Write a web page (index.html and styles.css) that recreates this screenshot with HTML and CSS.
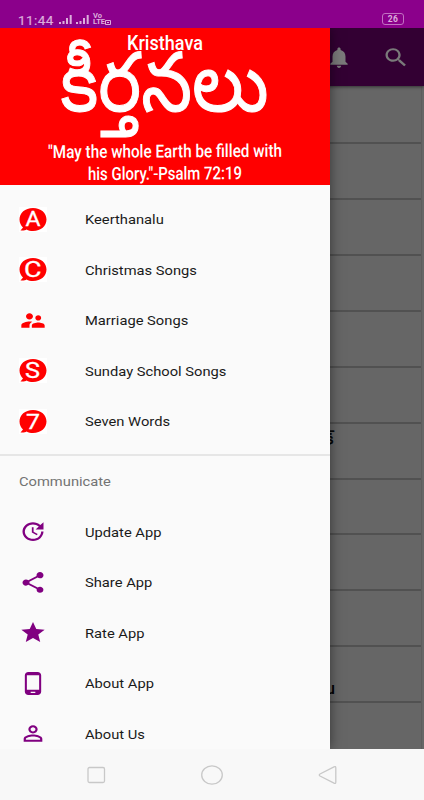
FILE: index.html
```html
<!DOCTYPE html>
<html lang="en">
<head>
<meta charset="utf-8">
<title>Kristhava Keerthanalu</title>
<link rel="stylesheet" href="styles.css">
</head>
<body>
<div class="phone">
  <header class="status">
    <div class="status-left">
      <span class="clock">11:44</span>
      <svg class="signal" width="13" height="10" viewBox="0 0 13 10"><path d="M0 8h2v2H0zM3.500 7h2v3h-2zM7 4h2v6H7zM10.700 1h2v9h-2z"/></svg>
      <svg class="signal" width="13" height="10" viewBox="0 0 13 10"><path d="M0 8h2v2H0zM3.500 7h2v3h-2zM7 4h2v6H7zM10.700 1h2v9h-2z"/></svg>
      <span class="volte"><span>Vo</span><span class="lte">LTE<svg width="6" height="5" viewBox="0 0 6 5"><path d="M.5.500h5v4h-5zM2 2.500h2"/></svg></span></span>
    </div>
    <div class="battery">26</div>
  </header>
  <main class="screen">
    <div class="toolbar">
      <svg class="bell" width="26" height="25" viewBox="0 0 24 24" preserveAspectRatio="none"><path d="M12 22c1.100 0 2-.9 2-2h-4c0 1.100.890 2 2 2zm6-6v-5c0-3.070-1.640-5.640-4.500-6.320V4c0-.830-.670-1.500-1.500-1.500s-1.500.670-1.500 1.500v.680C7.630 5.360 6 7.920 6 11v5l-2 2v1h16v-1l-2-2z"/></svg>
      <svg class="search" width="28" height="25" viewBox="0 0 24 24" preserveAspectRatio="none"><path d="M15.500 14h-.790l-.280-.270C15.410 12.590 16 11.110 16 9.500 16 5.910 13.090 3 9.500 3S3 5.910 3 9.500 5.910 16 9.500 16c1.610 0 3.090-.590 4.230-1.570l.270.280v.790l5 4.990L20.490 19l-4.990-5zm-6 0C7.010 14 5 11.990 5 9.500S7.010 5 9.500 5 14 7.010 14 9.500 11.990 14 9.500 14z"/></svg>
    </div>
    <div class="songs">
      <div class="song"></div><div class="song"></div><div class="song"></div><div class="song"></div><div class="song"></div><div class="song"></div>
      <div class="song"><span class="peek telugu">క్</span></div>
      <div class="song"></div><div class="song"></div><div class="song"></div>
      <div class="song low"><span class="peek latin">u</span></div>
      <div class="song"></div>
    </div>
    <aside class="drawer">
      <div class="banner">
        <svg width="330" height="157" viewBox="0 28 330 157">
          <text class="title" transform="translate(60.500 110.500) scale(1 1.140)" textLength="208" lengthAdjust="spacingAndGlyphs">కీర్తనలు</text>
          <text class="brand" x="127" y="49.500" textLength="76" lengthAdjust="spacingAndGlyphs">Kristhava</text>
          <text class="verse" transform="translate(48 158) rotate(-.3)" textLength="234" lengthAdjust="spacingAndGlyphs">"May the whole Earth be filled with</text>
          <text class="verse" transform="translate(88 180) rotate(-.3)" textLength="154" lengthAdjust="spacingAndGlyphs">his Glory."-Psalm 72:19</text>
        </svg>
      </div>
      <nav class="menu">
        <div class="item"><svg class="bubble" viewBox="0 0 28 25"><path class="tile" d="M0 0h28v25H0z"/><path d="M14 1C6 1 .5 6 .5 12.500c0 3.500 1.500 6 3.500 8L1.500 23.500c3 .3 5-.2 6-1 2 1 4 1.500 6.500 1.500 8 0 13.500-5 13.500-11.500S22 1 14 1z"/><text x="6.500" y="19" textLength="15" lengthAdjust="spacingAndGlyphs">A</text></svg><span class="label">Keerthanalu</span></div>
        <div class="item"><svg class="bubble" viewBox="0 0 28 25"><path class="tile" d="M0 0h28v25H0z"/><path d="M14 1C6 1 .5 6 .5 12.500c0 3.500 1.500 6 3.500 8L1.500 23.500c3 .3 5-.2 6-1 2 1 4 1.500 6.500 1.500 8 0 13.500-5 13.500-11.500S22 1 14 1z"/><text x="5" y="20" textLength="17.500" lengthAdjust="spacingAndGlyphs" class="wide">C</text></svg><span class="label">Christmas Songs</span></div>
        <div class="item"><svg class="icon couple" viewBox="0 0 24 24" preserveAspectRatio="none"><path d="M16.500 12c1.380 0 2.490-1.120 2.490-2.500S17.880 7 16.500 7 14 8.120 14 9.500s1.120 2.500 2.500 2.500zM9 11c1.660 0 2.990-1.340 2.990-3S10.660 5 9 5 6 6.340 6 8s1.340 3 3 3zm7.500 3c-1.830 0-5.500.920-5.500 2.750V19h11v-2.250c0-1.830-3.670-2.750-5.500-2.750zM9 13c-2.330 0-7 1.170-7 3.500V19h7v-2.250c0-.850.330-2.340 2.370-3.470C10.500 13.100 9.660 13 9 13z"/></svg><span class="label">Marriage Songs</span></div>
        <div class="item"><svg class="bubble" viewBox="0 0 28 25"><path class="tile" d="M0 0h28v25H0z"/><path d="M14 1C6 1 .5 6 .5 12.500c0 3.500 1.500 6 3.500 8L1.500 23.500c3 .3 5-.2 6-1 2 1 4 1.500 6.500 1.500 8 0 13.500-5 13.500-11.500S22 1 14 1z"/><text x="6" y="19.500" textLength="15" lengthAdjust="spacingAndGlyphs" class="wide">S</text></svg><span class="label">Sunday School Songs</span></div>
        <div class="item"><svg class="bubble" viewBox="0 0 28 25"><path class="tile" d="M0 0h28v25H0z"/><path d="M14 1C6 1 .5 6 .5 12.500c0 3.500 1.500 6 3.500 8L1.500 23.500c3 .3 5-.2 6-1 2 1 4 1.500 6.500 1.500 8 0 13.500-5 13.500-11.500S22 1 14 1z"/><text x="7" y="19.500" textLength="14" lengthAdjust="spacingAndGlyphs">7</text></svg><span class="label">Seven Words</span></div>
      </nav>
      <div class="heading"><span class="label">Communicate</span></div>
      <nav class="menu second">
        <div class="item"><svg class="icon" viewBox="0 0 24 24" preserveAspectRatio="none"><path d="M21 10.120h-6.780l2.740-2.820c-2.730-2.700-7.150-2.800-9.880-.1-2.730 2.710-2.730 7.080 0 9.790s7.150 2.710 9.880 0C18.320 15.650 19 14.080 19 12.100h2c0 1.980-.880 4.550-2.640 6.290-3.510 3.480-9.210 3.480-12.720 0-3.500-3.470-3.530-9.110-.020-12.580s9.140-3.470 12.650 0L21 3v7.120zM12.500 8v4.250l3.500 2.080-.720 1.210L11 13V8h1.500z"/></svg><span class="label">Update App</span></div>
        <div class="item"><svg class="icon" viewBox="0 0 24 24" preserveAspectRatio="none"><path d="M18 16.080c-.760 0-1.440.300-1.960.770L8.910 12.700c.050-.230.090-.460.090-.700s-.040-.470-.090-.700l7.050-4.110c.540.500 1.250.810 2.040.810 1.660 0 3-1.340 3-3s-1.340-3-3-3-3 1.340-3 3c0 .240.040.470.090.700L8.040 9.810C7.500 9.310 6.790 9 6 9c-1.660 0-3 1.340-3 3s1.340 3 3 3c.790 0 1.500-.310 2.040-.810l7.120 4.160c-.050.210-.080.430-.080.650 0 1.610 1.310 2.920 2.920 2.920s2.920-1.310 2.920-2.920-1.310-2.920-2.920-2.920z"/></svg><span class="label">Share App</span></div>
        <div class="item"><svg class="icon" viewBox="0 0 24 24" preserveAspectRatio="none"><path d="M12 17.270L18.180 21l-1.640-7.030L22 9.240l-7.190-.610L12 2 9.190 8.630 2 9.240l5.460 4.730L5.820 21z"/></svg><span class="label">Rate App</span></div>
        <div class="item"><svg class="icon" viewBox="0 0 24 24" preserveAspectRatio="none"><path d="M16 1H8C6.340 1 5 2.340 5 4v16c0 1.660 1.340 3 3 3h8c1.660 0 3-1.340 3-3V4c0-1.660-1.340-3-3-3zm-2 20h-4v-1h4v1zm3.250-3H6.750V4h10.500v14z"/></svg><span class="label">About App</span></div>
        <div class="item"><svg class="icon" viewBox="0 0 24 24" preserveAspectRatio="none"><path d="M12 5.900c1.160 0 2.100.940 2.100 2.100s-.940 2.100-2.100 2.100S9.900 9.160 9.900 8s.940-2.100 2.100-2.100m0 9c2.970 0 6.100 1.460 6.100 2.100v1.100H5.900V17c0-.640 3.130-2.100 6.100-2.100M12 4C9.790 4 8 5.790 8 8s1.790 4 4 4 4-1.790 4-4-1.790-4-4-4zm0 9c-2.670 0-8 1.340-8 4v3h16v-3c0-2.660-5.330-4-8-4z"/></svg><span class="label">About Us</span></div>
      </nav>
    </aside>
  </main>
  <footer class="keys">
    <svg width="20" height="20" viewBox="0 0 20 20"><rect x="2" y="2.500" width="16.500" height="15" rx="1.500"/></svg>
    <svg width="24" height="20" viewBox="0 0 24 20"><ellipse cx="12" cy="10" rx="10.300" ry="9.200"/></svg>
    <svg width="20" height="20" viewBox="0 0 20 20"><path d="M16 1.800Q17.800 1 17.800 2.800V17.200Q17.800 19 16 18.200L2 11Q.5 10 2 9z"/></svg>
  </footer>
</div>
</body>
</html>
```
FILE: styles.css
```css
* { box-sizing: border-box; }
body { margin: 0; font-family: Roboto, "Liberation Sans", sans-serif; }
svg { display: block; flex: none; }

.phone { width: 424px; height: 800px; overflow: hidden; display: flex; flex-direction: column; }

.status { height: 28px; flex: none; background: #8b008b; display: flex; justify-content: space-between; align-items: flex-start; padding: 12px 19px 0 18px; color: #dcaedc; }
.status-left { display: flex; align-items: flex-start; gap: 4px; }
.clock { width: 37px; font-size: 13.500px; line-height: 16px; letter-spacing: .4px; white-space: nowrap; -webkit-text-stroke: .2px #dcaedc; }
.signal { fill: #dcaedc; margin-top: 2px; }
.volte { display: flex; flex-direction: column; font-size: 7.500px; line-height: 7px; font-weight: 700; }
.lte { display: flex; align-items: center; line-height: 6px; height: 6px; }
.lte svg { fill: none; stroke: #dcaedc; }
.battery { width: 22px; height: 12px; margin: 1px 1px 0 0; border: 1px solid #c270c2; border-radius: 3px; font-size: 8.500px; line-height: 10px; font-weight: 700; text-align: center; letter-spacing: .3px; }

.screen { position: relative; height: 721px; flex: none; overflow: hidden; background: #666; }
.toolbar { height: 58px; background: #330033; display: flex; align-items: center; justify-content: flex-end; gap: 30px; padding-right: 14px; box-shadow: 0 1px 3px #333; position: relative; }
.toolbar svg { fill: #7a7a7a; }
.songs { width: 422px; padding-top: 2.600px; border-right: 1px solid #5d5d5d; }
.song { height: 55.850px; padding-left: 318px; border-bottom: 2px solid #515151; display: flex; align-items: center; overflow: hidden; }
.song.low { align-items: flex-end; padding-bottom: 3px; }
.peek { width: 17px; text-align: right; color: #000; font-size: 16px; font-weight: 500; }
.telugu { line-height: 20px; margin-top: -24px; margin-left: -2px; -webkit-text-stroke: .4px; }
.latin { line-height: 19px; }

.drawer { position: absolute; left: 0; top: 0; width: 330px; height: 721px; background: #fafafa; box-shadow: 0 0 12px rgba(0,0,0,.5); overflow: clip; }
.banner { height: 157px; background: #f00; }
.banner text { fill: #fff; }
.title { font-size: 72px; font-family: "Noto Sans Telugu", "Noto Sans", sans-serif; stroke: #fff; stroke-width: .9; }
.brand { font-size: 20.500px; font-weight: 500; }
.verse { font-size: 18px; font-weight: 500; }

.menu { padding: 9px 0 8px; }
.item { height: 50.550px; padding-left: 19px; display: flex; align-items: center; }
.bubble { width: 28px; height: 25px; margin-right: 38px; fill: #f00; }
.bubble .tile { fill: #fff; }
.bubble text { fill: #fff; stroke: #fff; stroke-width: .3; font: 400 20px Roboto, sans-serif; }
.bubble .wide { font-size: 21.500px; }
.icon { width: 28px; height: 25px; margin-right: 38px; fill: #800080; }
.icon.couple { fill: #f00; }
.label { font-size: 13.500px; line-height: 20px; color: #1a1a1a; transform: scaleX(1.090); transform-origin: left center; white-space: nowrap; }
.heading { height: 52.600px; margin-top: -1px; border-top: 2px solid #e6e6e6; padding: 0 0 0 19px; display: flex; align-items: center; }
.heading .label { color: #737373; }
.second { padding: 0; }

.keys { height: 51px; flex: none; background: #f8f8f8; display: flex; justify-content: center; align-items: center; gap: 94px; }
.keys svg { fill: none; stroke: #c8c8c8; stroke-width: 1.300; }
```
